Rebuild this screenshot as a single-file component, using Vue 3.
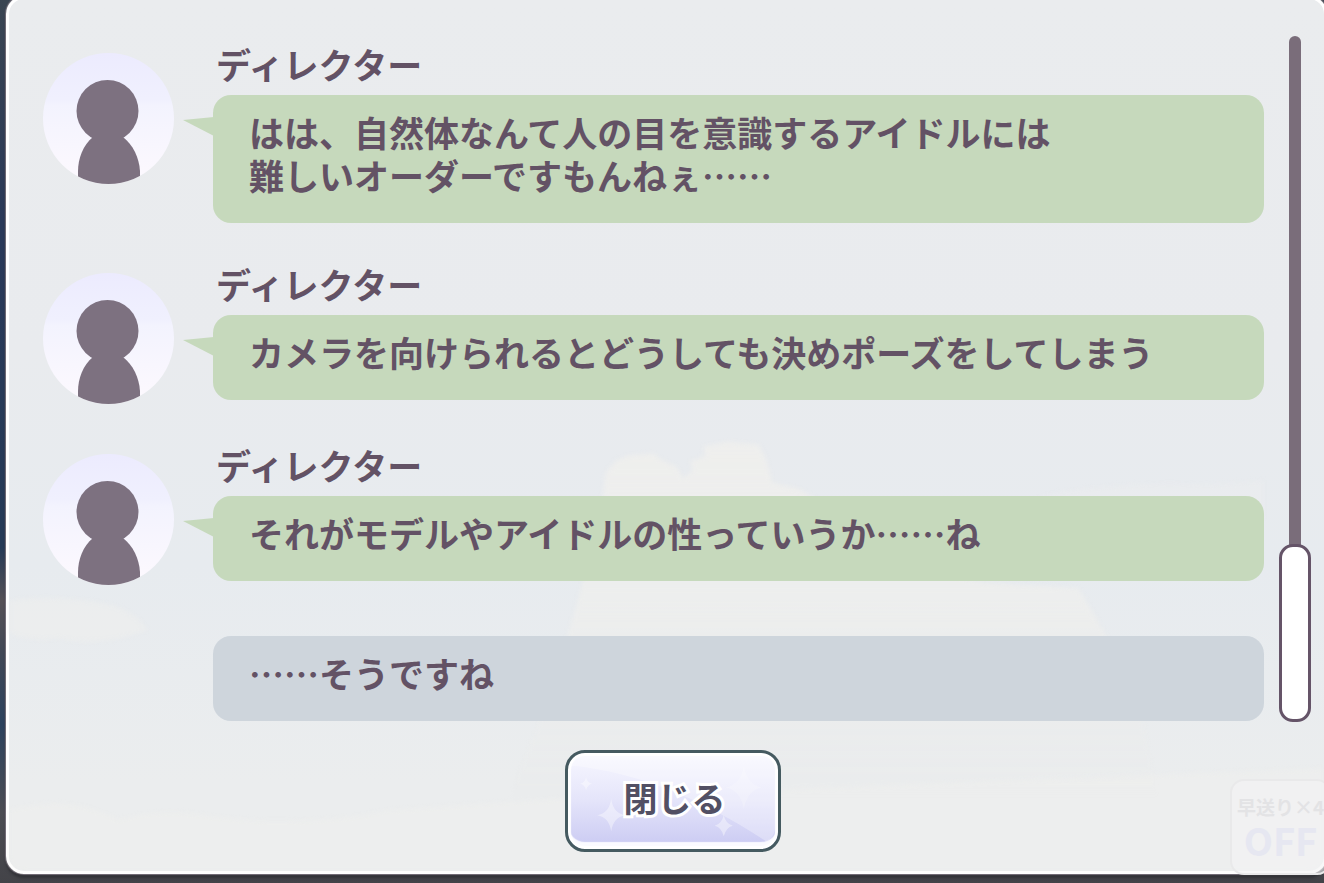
<script setup>
import { ref } from 'vue'

const isOpen = ref(true)
const isFast = ref(false)
const scroll = ref(100)

const messages = [
  {
    name: 'ディレクター',
    text: 'はは、自然体なんて人の目を意識するアイドルには\n難しいオーダーですもんねぇ……'
  },
  {
    name: 'ディレクター',
    text: 'カメラを向けられるとどうしても決めポーズをしてしまう'
  },
  {
    name: 'ディレクター',
    text: 'それがモデルやアイドルの性っていうか……ね'
  },
  {
    name: '',
    text: '……そうですね'
  }
]

const close = () => {
  isOpen.value = false
}
</script>

<template>
  <div class="stage">
    <main v-if="isOpen" class="panel">
      <svg class="sky" viewBox="0 0 1316 873" preserveAspectRatio="none" aria-hidden="true">
        <defs>
          <linearGradient id="cloud" x1="0" y1="0" x2="0" y2="1">
            <stop offset="0" stop-color="#efefed" stop-opacity="0.9" />
            <stop offset="0.5" stop-color="#efefed" stop-opacity="0.7" />
            <stop offset="1" stop-color="#efefed" stop-opacity="0" />
          </linearGradient>
        </defs>
        <path fill="url(#cloud)" d="M594 500 L597 474 L608 462 L620 457 L645 455 L652 461 L668 468 L675 480 L684 472 L682 462 L697 458 L695 448 L720 443 L750 446 L758 462 L764 484 L790 490 L840 520 L860 560 L975 584 L1070 590 L1085 615 L1100 640 L1130 700 L1150 800 L500 800 L540 700 L570 600 Z" />
        <g fill="#efefed">
          <path d="M1030 498 Q1100 482 1200 486 L1256 482 L1256 520 L1030 520 Z" opacity="0.3" />
          <path d="M0 602 Q50 596 100 606 Q130 615 138 632 Q90 650 50 640 Q20 645 0 634 Z" opacity="0.5" />
          <path d="M0 812 Q60 795 110 822 Q150 808 200 818 Q300 830 380 812 L560 800 L1316 770 L1316 873 L0 873 Z" opacity="0.45" />
        </g>
      </svg>

      <div class="content">
        <section class="log">
          <article v-for="(message, index) in messages" :key="index" class="message" :class="{ reply: !message.name }">
            <svg v-if="message.name" class="avatar" viewBox="0 0 131 131" aria-hidden="true">
              <defs>
                <linearGradient :id="`face-${index}`" x1="0" y1="0" x2="0" y2="1">
                  <stop offset="0" stop-color="#ecebfe" />
                  <stop offset="0.35" stop-color="#f0f0fe" />
                  <stop offset="0.4" stop-color="#f3f3fe" />
                  <stop offset="1" stop-color="#fdf9fe" />
                </linearGradient>
                <clipPath :id="`round-${index}`">
                  <circle cx="65.5" cy="65.5" r="65.5" />
                </clipPath>
              </defs>
              <circle cx="65.5" cy="65.5" r="65.5" :fill="`url(#face-${index})`" />
              <g :clip-path="`url(#round-${index})`" fill="#7d7180">
                <circle cx="64.5" cy="58" r="31" />
                <path d="M50 84 C40 92 35 106 35 118 L35 131 L97 131 L97 118 C96 104 90 92 80 84 Z" />
              </g>
            </svg>
            <div class="body">
              <h2 v-if="message.name" class="name">{{ message.name }}</h2>
              <div class="bubble">
                <svg v-if="message.name" class="tail" viewBox="0 0 31 19" aria-hidden="true">
                  <path d="M0 3 L31 0 L31 19 Z" fill="#c6d9bc" />
                </svg>
                <p>{{ message.text }}</p>
              </div>
            </div>
          </article>
        </section>
        <input v-model="scroll" class="scrollbar" type="range" min="0" max="100" aria-label="スクロール">
      </div>

      <button class="close" type="button" @click="close">
        <svg class="shine" viewBox="0 0 203 90" preserveAspectRatio="none" aria-hidden="true">
          <path d="M203 0 L0 0 L0 10 C70 18 130 45 195 90 L203 90 Z" fill="#fff" opacity="0.3" />
          <g fill="#fff" opacity="0.4">
            <path d="M40 45 Q42 60 54 62 Q42 64 40 79 Q38 64 26 62 Q38 60 40 45 Z" />
            <path d="M152 62 Q154 71 161 73 Q154 75 152 84 Q150 75 143 73 Q150 71 152 62 Z" />
            <path d="M15 22 Q16 28 21 29 Q16 30 15 36 Q14 30 9 29 Q14 28 15 22 Z" />
            <path d="M172 10 Q175 30 190 33 Q175 36 172 56 Q169 36 154 33 Q169 30 172 10 Z" opacity="0.5" />
          </g>
        </svg>
        <span>閉じる</span>
      </button>
    </main>

    <button class="speed" type="button" @click="isFast = !isFast">
      <span class="speed-label">早送り×4</span>
      <span class="speed-state">{{ isFast ? 'ON' : 'OFF' }}</span>
    </button>
  </div>
</template>

<style>
body {
  margin: 0;
  overflow: hidden;
}
</style>

<style scoped>
.stage {
  position: relative;
  display: flex;
  box-sizing: border-box;
  min-height: 100vh;
  padding: 0 0 9px 6px;
  overflow: hidden;
  color: #635265;
  font-family: "Noto Sans CJK JP", sans-serif;
  background: linear-gradient(#3b4652 0%, #2a3958 25%, #263b57 62%, #555156 68%, #414856 74%, #2d435e 82%, #4c4d53 92%, #434348 100%);
}

.panel {
  position: relative;
  display: flex;
  flex: 1;
  flex-direction: column;
  box-sizing: border-box;
  min-width: 0;
  margin: -4px -3px 0 0;
  padding: 0 13px 18px 34px;
  border: 3px solid #fff;
  border-radius: 18px;
  background: linear-gradient(#eaecee 0%, #e9ebee 40%, #e7ebef 65%, #ebedee 90%);
  box-shadow: 0 0 1px 1px #77707a, 0 4px 3px #303136;
}

.sky {
  position: absolute;
  inset: 0;
  width: 100%;
  height: 100%;
  border-radius: 15px;
  filter: blur(2px);
}

.content {
  position: relative;
  display: flex;
  gap: 15px;
}

.log {
  display: flex;
  flex: 1;
  flex-direction: column;
  gap: 39px;
  min-width: 0;
  padding-top: 43px;
}

.message {
  display: flex;
  gap: 39px;
}

.avatar {
  flex: none;
  width: 131px;
  height: 131px;
  margin-top: 11px;
}

.body {
  flex: 1;
  min-width: 0;
}

.name {
  margin: 0 0 10px 3px;
  font-size: 35px;
  font-weight: 700;
  line-height: 43px;
}

.bubble {
  position: relative;
  padding: 15px 36px 27px;
  border-radius: 18px;
  background: #c6d9bc;
}

.bubble p {
  margin: 0;
  font-size: 35px;
  font-weight: 700;
  line-height: 43px;
  white-space: pre-line;
}

.tail {
  position: absolute;
  top: 22px;
  left: -30px;
  width: 31px;
  height: 19px;
}

.reply {
  margin-left: 170px;
  padding-top: 12px;
}

.reply .bubble {
  background: #ced5dc;
}

.scrollbar {
  appearance: none;
  flex: none;
  width: 32px;
  height: auto;
  margin: 37px 0 -1px;
  background: none;
  writing-mode: vertical-lr;
  cursor: pointer;
}

.scrollbar::-webkit-slider-runnable-track {
  width: 12px;
  border-radius: 6px;
  background: #7a6d7a;
}

.scrollbar::-webkit-slider-thumb {
  appearance: none;
  box-sizing: border-box;
  width: 32px;
  height: 178px;
  margin-left: -10px;
  border: 3px solid #655468;
  border-radius: 14px;
  background: #fff;
}

.close {
  position: relative;
  align-self: center;
  box-sizing: border-box;
  width: 216px;
  height: 102px;
  margin: 29px 9px 0 0;
  padding: 0 0 8px 4px;
  border: 3px solid #455a60;
  border-radius: 20px;
  color: #525064;
  font-family: inherit;
  font-size: 34px;
  font-weight: 700;
  background: linear-gradient(#f8f8ff 0%, #e4e4fa 50%, #c9c9f2 100%);
  box-shadow: inset 0 0 1px 3px #fff, inset 0 -7px 1px #fafaff;
  cursor: pointer;
}

.close span {
  position: relative;
  -webkit-text-stroke: 6px #fff;
  paint-order: stroke fill;
}

.shine {
  position: absolute;
  top: 3px;
  left: 3px;
  width: calc(100% - 6px);
  height: calc(100% - 10px);
  border-radius: 14px;
}

.speed {
  position: absolute;
  right: -7px;
  bottom: 8px;
  display: flex;
  flex-direction: column;
  align-items: center;
  box-sizing: border-box;
  width: 101px;
  height: 96px;
  padding: 12px 0 0;
  border: 2px solid #e9e9ea;
  border-radius: 14px;
  font-family: inherit;
  font-weight: 700;
  background: rgba(244, 244, 245, 0.6);
}

.speed-label {
  color: #e3e3e5;
  font-size: 19px;
  line-height: 28px;
  white-space: nowrap;
}

.speed-state {
  color: #e6e7f1;
  font-size: 38px;
  line-height: 38px;
}
</style>
